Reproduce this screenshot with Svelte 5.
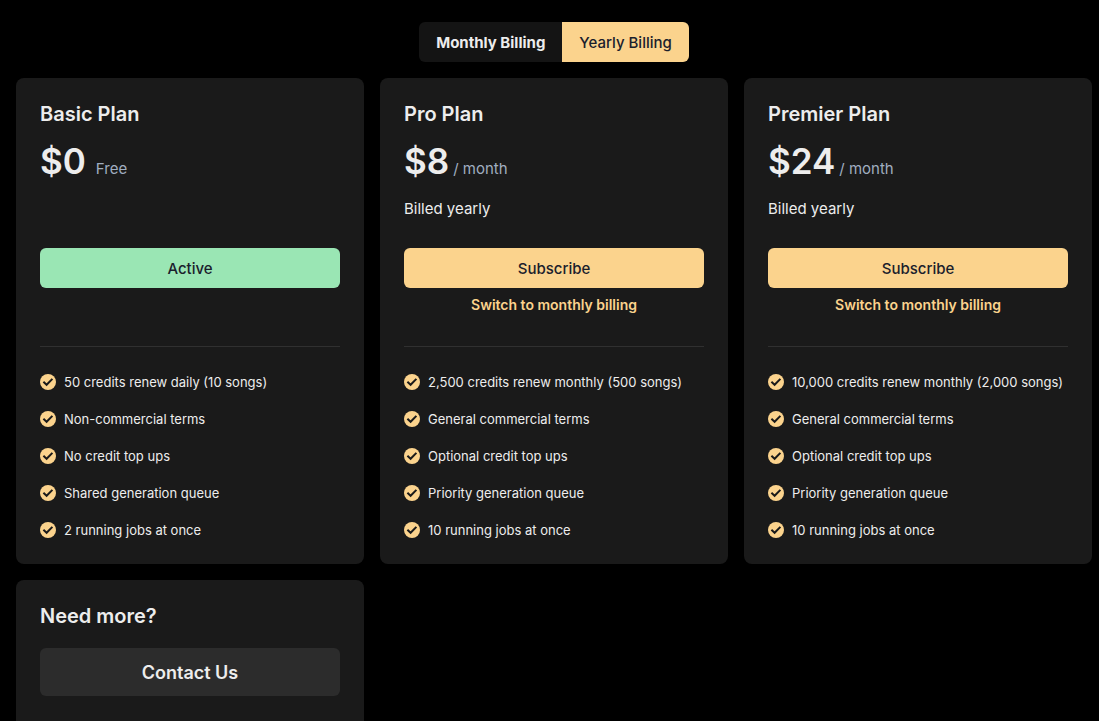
<script lang="ts">
  type Billing = 'monthly' | 'yearly';

  interface Plan {
    id: string;
    name: string;
    monthly: number;
    yearly: number;
    features: string[];
  }

  const plans: Plan[] = [
    {
      id: 'basic',
      name: 'Basic Plan',
      monthly: 0,
      yearly: 0,
      features: [
        '50 credits renew daily (10 songs)',
        'Non-commercial terms',
        'No credit top ups',
        'Shared generation queue',
        '2 running jobs at once',
      ],
    },
    {
      id: 'pro',
      name: 'Pro Plan',
      monthly: 10,
      yearly: 8,
      features: [
        '2,500 credits renew monthly (500 songs)',
        'General commercial terms',
        'Optional credit top ups',
        'Priority generation queue',
        '10 running jobs at once',
      ],
    },
    {
      id: 'premier',
      name: 'Premier Plan',
      monthly: 30,
      yearly: 24,
      features: [
        '10,000 credits renew monthly (2,000 songs)',
        'General commercial terms',
        'Optional credit top ups',
        'Priority generation queue',
        '10 running jobs at once',
      ],
    },
  ];

  let billing = $state<Billing>('yearly');
  let activePlan = 'basic';

  const other = $derived<Billing>(billing === 'yearly' ? 'monthly' : 'yearly');
</script>

<main class="page">
  <div class="toggle">
    <button type="button" class:selected={billing === 'monthly'} aria-pressed={billing === 'monthly'} onclick={() => (billing = 'monthly')}>Monthly Billing</button>
    <button type="button" class:selected={billing === 'yearly'} aria-pressed={billing === 'yearly'} onclick={() => (billing = 'yearly')}>Yearly Billing</button>
  </div>

  <div class="plans">
    {#each plans as plan (plan.id)}
      {@const price = plan[billing]}
      <section class="card">
        <h2>{plan.name}</h2>
        <div class="price" class:free={price === 0}>
          <span class="amount">${price}</span>
          <span class="period">{price === 0 ? 'Free' : '/ month'}</span>
        </div>
        <p class="billed">{price > 0 ? `Billed ${billing}` : ''}</p>
        {#if plan.id === activePlan}
          <button type="button" class="action active">Active</button>
        {:else}
          <button type="button" class="action">Subscribe</button>
        {/if}
        <div class="switch">
          {#if price > 0}
            <button type="button" onclick={() => (billing = other)}>Switch to {other} billing</button>
          {/if}
        </div>
        <ul>
          {#each plan.features as feature}
            <li>
              <svg viewBox="0 0 16 16" width="16" height="16" aria-hidden="true">
                <circle cx="8" cy="8" r="8" fill="#fbd38d" />
                <path d="M3.4 7.8 L6.6 10.8 L12.4 4.9" fill="none" stroke="#1a1a1a" stroke-width="2" />
              </svg>
              <span>{feature}</span>
            </li>
          {/each}
        </ul>
      </section>
    {/each}

    <section class="card contact">
      <h2>Need more?</h2>
      <button type="button" class="contact-btn">Contact Us</button>
    </section>
  </div>
</main>

<style>
  :global(body) { margin: 0; background: #000; }

  .page {
    display: flex;
    flex-direction: column;
    gap: 16px;
    padding: 22px 7px 0 16px;
    color: #ededed;
    font-family: Inter, "Liberation Sans", sans-serif;
    font-size: 15px;
  }
  button { border: 0; margin: 0; padding: 0; font: inherit; color: inherit; cursor: pointer; }

  .toggle { display: flex; align-self: center; border-radius: 6px; overflow: hidden; }
  .toggle button { height: 40px; padding: 0 17px; background: #141414; font-weight: 700; }
  .toggle button.selected { background: #fbd38d; color: #1a202c; font-weight: 500; }

  .plans { display: grid; grid-template-columns: repeat(3, minmax(0, 1fr)); gap: 16px; }
  .card { display: flex; flex-direction: column; padding: 24px 24px 23px; border-radius: 8px; background: #1a1a1a; }
  h2 { margin: 0; font-size: 20px; line-height: 24px; font-weight: 600; }

  .price { display: flex; align-items: baseline; gap: 4px; margin-top: 14px; }
  .price.free { gap: 10px; }
  .amount { font-size: 35px; line-height: 42px; font-weight: 600; }
  .period { line-height: 20px; color: #a0aec0; }
  .billed { height: 24px; margin: 15px 0 27px; line-height: 24px; }

  .action { height: 40px; border-radius: 6px; background: #fbd38d; color: #1a202c; font-weight: 500; }
  .action.active { background: #9ae6b4; }
  .switch { display: flex; justify-content: center; height: 35px; padding-top: 7px; margin-bottom: 16px; }
  .switch button { height: 20px; background: none; color: #fbd38d; font-size: 14px; line-height: 20px; font-weight: 600; }

  ul { display: flex; flex-direction: column; gap: 15px; margin: 0; padding: 24px 0 0; border-top: 1px solid #303030; list-style: none; }
  li { display: flex; align-items: center; gap: 8px; font-size: 13px; line-height: 22px; }
  li svg { flex: none; }

  .contact { min-height: 120px; }
  .contact-btn { height: 48px; margin-top: 20px; border-radius: 6px; background: #2c2c2c; font-size: 18px; font-weight: 600; }
</style>
